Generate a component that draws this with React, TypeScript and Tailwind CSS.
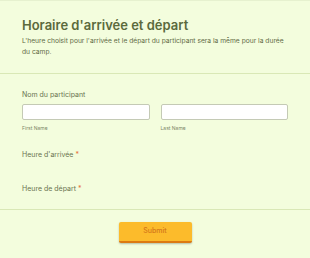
export default function App() {
  return (
    <div
      className="w-[310px] h-[258px] bg-[#f3fddd] border-t border-[#e6f1cf] overflow-hidden"
      style={{ fontFamily: "Inter, 'Noto Sans', sans-serif" }}
    >
      {/* Header */}
      <div className="px-[22px] pt-[16px] pb-[16px] border-b border-[#d9e8b6]">
        <h1 className="text-[13px] leading-[16px] font-semibold text-[#5b6a3c]">
          Horaire d'arrivée et départ
        </h1>
        <p className="mt-[3px] w-[262px] text-[6.7px] leading-[10.5px] text-[#5f6b45]">
          L'heure choisit pour l'arrivée et le départ du participant sera la même pour la durée
          du camp.
        </p>
      </div>

      {/* Fields */}
      <div className="px-[22px] pt-[15.5px] pb-[14.5px] border-b border-[#d9e8b6]">
        <p className="text-[7px] leading-[10px] text-[#6a7450]">Nom du participant</p>
        <div className="mt-[4.5px] grid grid-cols-2 gap-[11px]">
          <div>
            <div className="h-[16px] bg-white border border-[#c4cab5] rounded-[2px]" />
            <p className="mt-[4px] text-[5px] leading-[8px] text-[#7c8767]">First Name</p>
          </div>
          <div>
            <div className="h-[16px] bg-white border border-[#c4cab5] rounded-[2px]" />
            <p className="mt-[4px] text-[5px] leading-[8px] text-[#7c8767]">Last Name</p>
          </div>
        </div>
        <p className="mt-[18px] text-[7px] leading-[10px] text-[#6a7450]">
          Heure d'arrivée <span className="text-[#e8743b]">*</span>
        </p>
        <p className="mt-[24px] text-[7px] leading-[10px] text-[#6a7450]">
          Heure de départ <span className="text-[#e8743b]">*</span>
        </p>
      </div>

      {/* Submit */}
      <div className="flex justify-center pt-[12px]">
        <button className="w-[73px] h-[21px] bg-[#fcbb2b] border-b-2 border-[#dc7a12] rounded-[2px] shadow-[0_1px_2px_rgba(0,0,0,0.25)] text-[7px] font-medium text-[#d4781a]">
          Submit
        </button>
      </div>
    </div>
  );
}
